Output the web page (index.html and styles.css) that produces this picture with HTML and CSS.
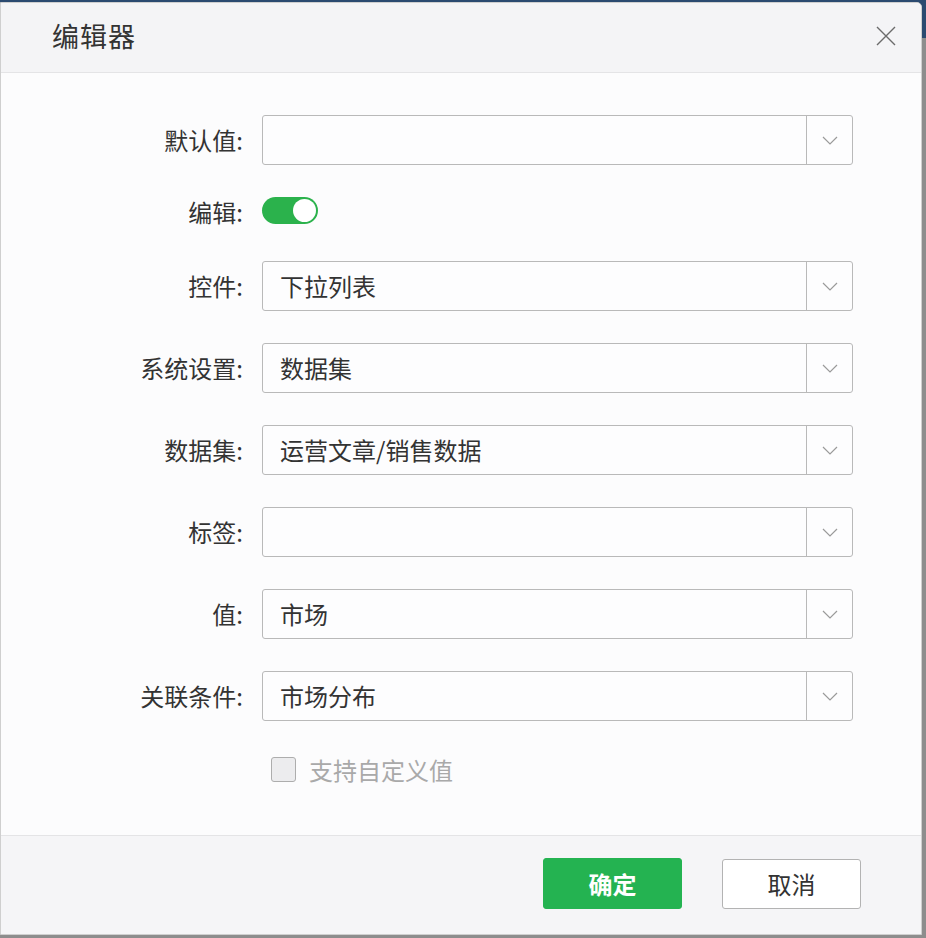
FILE: index.html
```html
<!DOCTYPE html>
<html lang="zh-CN">
<head>
  <meta charset="UTF-8">
  <meta name="viewport" content="width=device-width, initial-scale=1.0">
  <title>编辑器</title>
  <link rel="stylesheet" href="styles.css">
</head>
<body>
  <div class="dialog">
    <div class="dialog-header">
      <h2 class="dialog-title">编辑器</h2>
      <button class="close-btn" aria-label="关闭">
        <svg width="20" height="20" viewBox="0 0 20 20"><path d="M1 1L19 19M19 1L1 19" stroke="#6b6b6b" stroke-width="1.4" fill="none"/></svg>
      </button>
    </div>

    <div class="dialog-body">
      <div class="form-row">
        <label class="form-label">默认值:</label>
        <div class="select"><span class="select-value"></span><span class="select-arrow"><svg width="16" height="9" viewBox="0 0 16 9"><path d="M1 1L8 8L15 1" stroke="#9a9a9a" stroke-width="1.2" fill="none"/></svg></span></div>
      </div>

      <div class="form-row toggle-row">
        <label class="form-label">编辑:</label>
        <div class="toggle on"><span class="toggle-knob"></span></div>
      </div>

      <div class="form-row">
        <label class="form-label">控件:</label>
        <div class="select"><span class="select-value">下拉列表</span><span class="select-arrow"><svg width="16" height="9" viewBox="0 0 16 9"><path d="M1 1L8 8L15 1" stroke="#9a9a9a" stroke-width="1.2" fill="none"/></svg></span></div>
      </div>

      <div class="form-row">
        <label class="form-label">系统设置:</label>
        <div class="select"><span class="select-value">数据集</span><span class="select-arrow"><svg width="16" height="9" viewBox="0 0 16 9"><path d="M1 1L8 8L15 1" stroke="#9a9a9a" stroke-width="1.2" fill="none"/></svg></span></div>
      </div>

      <div class="form-row">
        <label class="form-label">数据集:</label>
        <div class="select"><span class="select-value">运营文章/销售数据</span><span class="select-arrow"><svg width="16" height="9" viewBox="0 0 16 9"><path d="M1 1L8 8L15 1" stroke="#9a9a9a" stroke-width="1.2" fill="none"/></svg></span></div>
      </div>

      <div class="form-row">
        <label class="form-label">标签:</label>
        <div class="select"><span class="select-value"></span><span class="select-arrow"><svg width="16" height="9" viewBox="0 0 16 9"><path d="M1 1L8 8L15 1" stroke="#9a9a9a" stroke-width="1.2" fill="none"/></svg></span></div>
      </div>

      <div class="form-row">
        <label class="form-label">值:</label>
        <div class="select"><span class="select-value">市场</span><span class="select-arrow"><svg width="16" height="9" viewBox="0 0 16 9"><path d="M1 1L8 8L15 1" stroke="#9a9a9a" stroke-width="1.2" fill="none"/></svg></span></div>
      </div>

      <div class="form-row">
        <label class="form-label">关联条件:</label>
        <div class="select"><span class="select-value">市场分布</span><span class="select-arrow"><svg width="16" height="9" viewBox="0 0 16 9"><path d="M1 1L8 8L15 1" stroke="#9a9a9a" stroke-width="1.2" fill="none"/></svg></span></div>
      </div>

      <div class="form-row check-row">
        <span class="form-label"></span>
        <label class="checkbox disabled"><span class="checkbox-box"></span>支持自定义值</label>
      </div>
    </div>

    <div class="dialog-footer">
      <button class="btn btn-primary">确定</button>
      <button class="btn btn-default">取消</button>
    </div>
  </div>
</body>
</html>
```

FILE: styles.css
```css
html, body {
  margin: 0;
  padding: 0;
}
body {
  width: 926px;
  height: 938px;
  overflow: hidden;
  padding-top: 2px;
  box-sizing: border-box;
  background: linear-gradient(to bottom, #2b4a70 0, #2b4a70 38px, #8d8d8d 38px);
  font-family: "Noto Sans CJK SC", "Microsoft YaHei", sans-serif;
  color: #333333;
}
.dialog {
  width: 922px;
  height: 933px;
  box-sizing: border-box;
  border: 1px solid #cfcfcf;
  border-radius: 0 5px 0 0;
  background-color: #fcfcfd;
  display: flex;
  flex-direction: column;
}
.dialog-header {
  height: 69px;
  flex-shrink: 0;
  display: flex;
  align-items: center;
  justify-content: space-between;
  padding: 0 25px 4px 51px;
  box-sizing: border-box;
  background-color: #f4f4f6;
  border-bottom: 1px solid #e4e4e6;
  border-radius: 0 5px 0 0;
}
.dialog-header {
  height: 70px;
}
.dialog-title {
  margin: 0;
  font-size: 27px;
  font-weight: 400;
  color: #333333;
  letter-spacing: 1px;
}
.close-btn {
  background: none;
  border: none;
  padding: 0;
  width: 20px;
  height: 20px;
  cursor: pointer;
  margin-top: 1px;
}
.dialog-body {
  flex: 1;
  padding-top: 42px;
  display: flex;
  flex-direction: column;
  gap: 32px;
}
.form-row {
  display: flex;
  align-items: center;
  height: 50px;
}
.form-label {
  width: 261px;
  flex-shrink: 0;
  text-align: right;
  padding-right: 19px;
  box-sizing: border-box;
  font-size: 24px;
  line-height: 30px;
  color: #333333;
}
.select {
  width: 591px;
  height: 50px;
  box-sizing: border-box;
  border: 1px solid #b9b9b9;
  border-radius: 3px;
  background-color: #fdfdfe;
  display: flex;
  align-items: stretch;
}
.select-value {
  flex: 1;
  display: flex;
  align-items: center;
  padding-left: 17px;
  padding-bottom: 2px;
  font-size: 24px;
  color: #333333;
}
.select-arrow {
  width: 45px;
  border-left: 1px solid #b9b9b9;
  display: flex;
  align-items: center;
  justify-content: center;
}
.toggle-row {
  height: 32px;
  align-items: flex-start;
}
.toggle {
  width: 56px;
  height: 27px;
  border-radius: 14px;
  background-color: #2bb24c;
  position: relative;
}
.toggle-knob {
  position: absolute;
  top: 2px;
  right: 2px;
  width: 23px;
  height: 23px;
  border-radius: 50%;
  background-color: #ffffff;
}
.check-row {
  height: 32px;
}
.checkbox {
  display: flex;
  align-items: center;
  gap: 13px;
  margin-left: 9px;
  font-size: 24px;
  color: #a9a9a9;
}
.checkbox-box {
  width: 23px;
  height: 23px;
  border: 1px solid #adadad;
  border-radius: 3px;
  background-color: #ececee;
}
.dialog-footer {
  height: 99px;
  flex-shrink: 0;
  display: flex;
  align-items: center;
  justify-content: flex-end;
  gap: 40px;
  padding: 0 60px 3px 0;
  box-sizing: border-box;
  background-color: #f5f5f7;
  border-top: 1px solid #e4e4e6;
}
.btn {
  width: 139px;
  height: 51px;
  border-radius: 3px;
  font-family: inherit;
  font-size: 24px;
  cursor: pointer;
}
.btn-primary {
  background-color: #24b351;
  border: 1px solid #24b351;
  color: #ffffff;
  font-weight: 700;
}
.btn-default {
  background-color: #ffffff;
  border: 1px solid #b3b3b3;
  color: #333333;
  height: 50px;
}
```
